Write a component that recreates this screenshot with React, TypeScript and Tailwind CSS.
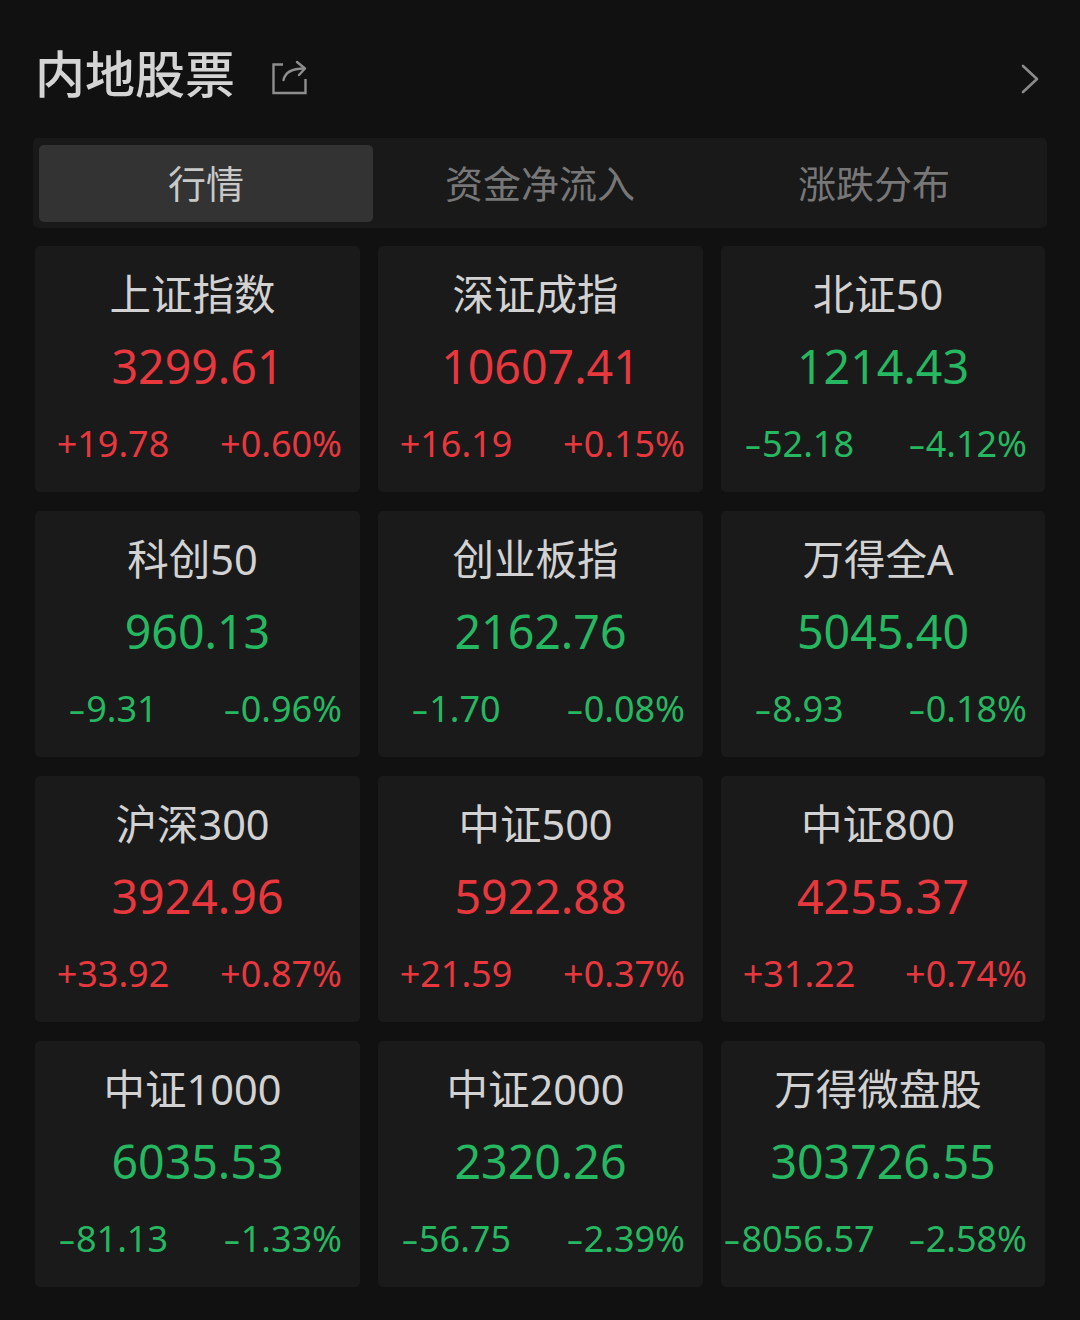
const FONT = "font-['Noto_Sans','Noto_Sans_CJK_SC',sans-serif]";

type Item = { name: string; value: string; change: string; pct: string; up: boolean };

const items: Item[] = [
  { name: "上证指数", value: "3299.61", change: "+19.78", pct: "+0.60%", up: true },
  { name: "深证成指", value: "10607.41", change: "+16.19", pct: "+0.15%", up: true },
  { name: "北证50", value: "1214.43", change: "-52.18", pct: "-4.12%", up: false },
  { name: "科创50", value: "960.13", change: "-9.31", pct: "-0.96%", up: false },
  { name: "创业板指", value: "2162.76", change: "-1.70", pct: "-0.08%", up: false },
  { name: "万得全A", value: "5045.40", change: "-8.93", pct: "-0.18%", up: false },
  { name: "沪深300", value: "3924.96", change: "+33.92", pct: "+0.87%", up: true },
  { name: "中证500", value: "5922.88", change: "+21.59", pct: "+0.37%", up: true },
  { name: "中证800", value: "4255.37", change: "+31.22", pct: "+0.74%", up: true },
  { name: "中证1000", value: "6035.53", change: "-81.13", pct: "-1.33%", up: false },
  { name: "中证2000", value: "2320.26", change: "-56.75", pct: "-2.39%", up: false },
  { name: "万得微盘股", value: "303726.55", change: "-8056.57", pct: "-2.58%", up: false },
];

function Signed({ text }: { text: string }) {
  if (!text.startsWith("-")) return <>{text}</>;
  return (
    <>
      <span className="inline-block w-[18px] scale-x-150 text-center">-</span>
      {text.slice(1)}
    </>
  );
}

function Card({ item }: { item: Item }) {
  const color = item.up ? "text-[#e8383e]" : "text-[#26b860]";
  return (
    <div className="h-[246px] rounded-[5px] bg-[#1a1a1b] flex flex-col items-center">
      <div className="mt-[22px] pr-[10px] h-[52px] leading-[52px] text-[41.5px] text-[#d2d2d2] whitespace-nowrap">{item.name}</div>
      <div className={`mt-[16px] h-[60px] leading-[60px] text-[46.5px] whitespace-nowrap ${color}`}>{item.value}</div>
      <div className={`mt-[25px] w-full flex justify-between items-center pr-[18px] h-[46px] leading-[46px] text-[36px] ${color}`}>
        <span className="w-[156px] text-center whitespace-nowrap"><Signed text={item.change} /></span>
        <span className="whitespace-nowrap"><Signed text={item.pct} /></span>
      </div>
    </div>
  );
}

export default function App() {
  return (
    <div className={`w-[1080px] h-[1320px] bg-[#111112] overflow-hidden px-[35px] ${FONT}`}>
      <div className="h-[138px] flex items-center pt-[10px]">
        <h1 className="text-[50px] leading-[60px] font-medium text-[#d4d4d4] whitespace-nowrap">内地股票</h1>
        <svg className="ml-[36px] mt-[6px]" width="36" height="36" viewBox="0 0 36 36" fill="none" stroke="#8e8e8e" strokeWidth="2.4">
          <path d="M12 5.5H2.5V34H34.5V20" />
          <path d="M12.5 21C14 14 19 9.5 33 9.5" strokeLinecap="round" />
          <path d="M26 3L34 9.5L28 16" strokeLinecap="round" strokeLinejoin="round" />
        </svg>
        <svg className="ml-auto mr-[5px] mt-[10px]" width="20" height="32" viewBox="0 0 20 32" fill="none" stroke="#8a8a8a" strokeWidth="2.6" strokeLinecap="round" strokeLinejoin="round">
          <path d="M3 3L17 16L3 29" />
        </svg>
      </div>
      <div className="-mx-[2px] h-[90px] rounded-[5px] bg-[#19191a] flex items-center px-[6px] text-[38px]">
        <div className="w-[334px] h-[77px] rounded-[5px] bg-[#333334] text-[#c8c8c8] flex items-center justify-center">行情</div>
        <div className="w-[334px] h-[77px] text-[#777778] flex items-center justify-center">资金净流入</div>
        <div className="w-[334px] h-[77px] text-[#777778] flex items-center justify-center">涨跌分布</div>
      </div>
      <div className="mt-[18px] grid grid-cols-[325px_325px_324px] gap-x-[18px] gap-y-[19px]">
        {items.map((item) => (
          <Card key={item.name} item={item} />
        ))}
      </div>
    </div>
  );
}
